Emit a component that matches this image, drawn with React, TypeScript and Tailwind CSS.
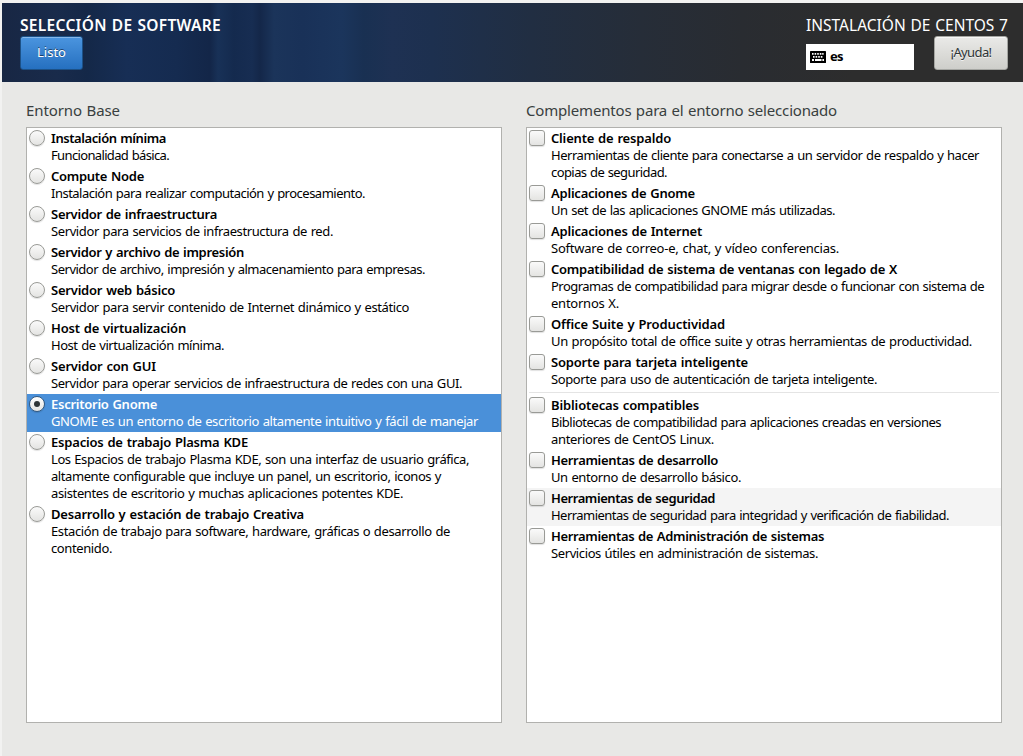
import { useLayoutEffect, useRef, useState } from "react";

type Line = [text: string, width: number];
type Item = { title: Line; body: Line[]; state?: "selected" | "hover"; divider?: boolean };

const environments: Item[] = [
  { title: ["Instalación mínima", 115], body: [["Funcionalidad básica.", 118]] },
  { title: ["Compute Node", 93], body: [["Instalación para realizar computación y procesamiento.", 314]] },
  { title: ["Servidor de infraestructura", 166], body: [["Servidor para servicios de infraestructura de red.", 282]] },
  { title: ["Servidor y archivo de impresión", 193], body: [["Servidor de archivo, impresión y almacenamiento para empresas.", 374]] },
  { title: ["Servidor web básico", 124], body: [["Servidor para servir contenido de Internet dinámico y estático", 358]] },
  { title: ["Host de virtualización", 135], body: [["Host de virtualización mínima.", 173]] },
  { title: ["Servidor con GUI", 105], body: [["Servidor para operar servicios de infraestructura de redes con una GUI.", 411]] },
  { title: ["Escritorio Gnome", 106], body: [["GNOME es un entorno de escritorio altamente intuitivo y fácil de manejar", 427]], state: "selected" },
  {
    title: ["Espacios de trabajo Plasma KDE", 197],
    body: [
      ["Los Espacios de trabajo Plasma KDE, son una interfaz de usuario gráfica,", 418],
      ["altamente configurable que incluye un panel, un escritorio, iconos y", 390],
      ["asistentes de escritorio y muchas aplicaciones potentes KDE.", 352],
    ],
  },
  {
    title: ["Desarrollo y estación de trabajo Creativa", 253],
    body: [["Estación de trabajo para software, hardware, gráficas o desarrollo de", 399], ["contenido.", 61]],
  },
];

const addons: Item[] = [
  {
    title: ["Cliente de respaldo", 120],
    body: [["Herramientas de cliente para conectarse a un servidor de respaldo y hacer", 428], ["copias de seguridad.", 116]],
  },
  { title: ["Aplicaciones de Gnome", 144], body: [["Un set de las aplicaciones GNOME más utilizadas.", 284]] },
  { title: ["Aplicaciones de Internet", 151], body: [["Software de correo-e, chat, y vídeo conferencias.", 288]] },
  {
    title: ["Compatibilidad de sistema de ventanas con legado de X", 346],
    body: [["Programas de compatibilidad para migrar desde o funcionar con sistema de", 433], ["entornos X.", 68]],
  },
  { title: ["Office Suite y Productividad", 174], body: [["Un propósito total de office suite y otras herramientas de productividad.", 421]] },
  { title: ["Soporte para tarjeta inteligente", 197], body: [["Soporte para uso de autenticación de tarjeta inteligente.", 326]], divider: true },
  {
    title: ["Bibliotecas compatibles", 148],
    body: [["Bibliotecas de compatibilidad para aplicaciones creadas en versiones", 390], ["anteriores de CentOS Linux.", 163]],
  },
  { title: ["Herramientas de desarrollo", 167], body: [["Un entorno de desarrollo básico.", 190]] },
  { title: ["Herramientas de seguridad", 164], body: [["Herramientas de seguridad para integridad y verificación de fiabilidad.", 398]], state: "hover" },
  { title: ["Herramientas de Administración de sistemas", 273], body: [["Servicios útiles en administración de sistemas.", 267]] },
];

/* A single line of text whose tracking is adjusted to span the given width. */
function Fit({ line, className = "" }: { line: Line; className?: string }) {
  const ref = useRef<HTMLSpanElement>(null);
  const [spacing, setSpacing] = useState(0);
  useLayoutEffect(() => {
    const el = ref.current;
    if (el) setSpacing((line[1] - el.getBoundingClientRect().width) / line[0].length);
  }, [line[0], line[1]]);
  return (
    <span className={`block whitespace-nowrap ${className}`}>
      <span ref={ref} className="[word-spacing:0.7px]" style={{ letterSpacing: spacing }}>{line[0]}</span>
    </span>
  );
}

function Marker({ kind, selected }: { kind: "radio" | "check"; selected: boolean }) {
  return (
    <span
      className={`flex size-4 shrink-0 items-center justify-center border bg-linear-to-b shadow-[0_1px_1px_rgba(0,0,0,0.12)] ${
        kind === "radio" ? "rounded-full" : "rounded-[3px]"
      } ${selected ? "border-[#34597f] from-white to-[#e4e4e2]" : "border-[#999a96] from-[#fafafa] to-[#e4e4e2]"}`}
    >
      {selected && <span className="size-1.5 rounded-full bg-[#2e3436]" />}
    </span>
  );
}

function List({ heading, items, kind }: { heading: Line; items: Item[]; kind: "radio" | "check" }) {
  return (
    <section className="w-[476px]">
      <h2 className="h-[27px] text-[15px] leading-[20px] text-[#393f40]">
        <Fit line={heading} />
      </h2>
      <div className="h-[596px] border border-[#b1b1ae] bg-white">
        {items.map((item) => (
          <div key={item.title[0]}>
            <div
              className={`flex gap-[6px] py-[2px] pl-[2px] text-[13px] leading-[17px] ${
                item.state === "selected" ? "bg-[#4a90d9] text-white" : item.state === "hover" ? "bg-[#f4f4f4] text-black" : "text-black"
              }`}
            >
              <Marker kind={kind} selected={item.state === "selected"} />
              <div>
                <Fit line={item.title} className="font-semibold" />
                {item.body.map((line) => (
                  <Fit key={line[0]} line={line} />
                ))}
              </div>
            </div>
            {item.divider && (
              <div className="h-[5px] px-[2px] pt-[2px]">
                <div className="h-px bg-[#e4e4e4]" />
              </div>
            )}
          </div>
        ))}
      </div>
    </section>
  );
}

function KeyboardIcon() {
  return (
    <svg width="16" height="12" viewBox="0 0 16 12">
      <rect width="16" height="12" rx="0.6" fill="#000" />
      <path
        d="M2 2h1.6v1.7H2zM4.6 2h1.6v1.7H4.6zM7.2 2h1.6v1.7H7.2zM9.8 2h1.6v1.7H9.8zM12.2 2h1.4v1.7h-1.4zM3 5h1.6v1.7H3zM5.6 5h1.6v1.7H5.6zM8.2 5h1.6v1.7H8.2zM10.8 5h1.6v1.7h-1.6zM2 8h2v1.9H2zM5 8h6.5v1.9H5zM12.4 8H14v1.9h-1.6z"
        fill="#fff"
      />
    </svg>
  );
}

function Header() {
  return (
    <header className="flex h-[79px] justify-between bg-[linear-gradient(90deg,#182744_0px,#192b4b_55px,#142848_85px,#172e55_125px,#152b50_175px,#132648_208px,#183157_216px,#142a4e_232px,#172d52_250px,#142749_258px,#1b345a_272px,#193158_300px,#1b355c_340px,#193052_362px,#1e3153_390px,#1d304f_430px,#212e42_530px,#262d38_640px,#292c31_740px,#2d2d2d_850px)] pr-[15px] pl-[18px] pt-[12px] text-white">
      <div>
        <h1 className="h-[21px] text-[15.5px] leading-5 font-semibold">
          <Fit line={["SELECCIÓN DE SOFTWARE", 201]} />
        </h1>
        <button className="flex h-[34px] w-[63px] items-center justify-center rounded-[3px] border border-[#1c5187] bg-linear-to-b from-[#4b95df] to-[#2570c0] text-[13px] shadow-[inset_0_1px_0_#85b7e9] text-shadow-[0_-1px_0_rgba(0,0,0,0.5)]">
          <Fit line={["Listo", 29]} />
        </button>
      </div>
      <div className="w-[202px]">
        <div className="h-[21px] text-[15.5px] leading-5">
          <Fit line={["INSTALACIÓN DE CENTOS 7", 202]} />
        </div>
        <div className="flex items-end justify-between">
          <div className="flex h-[26px] w-[108px] items-center gap-1 bg-white pl-1 text-[13px] font-bold text-black">
            <KeyboardIcon />
            <Fit line={["es", 13]} />
          </div>
          <button className="flex h-[34px] w-[74px] items-center justify-center rounded-[3px] border border-[#a5a6a2] bg-linear-to-b from-[#eaeae8] to-[#cececa] text-[13px] text-[#2e3436] shadow-[inset_0_1px_0_#f7f7f6] text-shadow-[0_1px_0_rgba(255,255,255,0.7)]">
            <Fit line={["¡Ayuda!", 41]} />
          </button>
        </div>
      </div>
    </header>
  );
}

export default function App() {
  return (
    <div className="h-[756px] w-[1023px] overflow-hidden bg-[#f2f2f1] pt-[3px] pl-[2px] font-['Noto_Sans','Open_Sans',sans-serif]">
      <div className="h-[753px] bg-[#e8e8e6]">
        <Header />
        <main className="flex gap-6 pt-[18px] pl-6">
          <List heading={["Entorno Base", 94]} items={environments} kind="radio" />
          <List heading={["Complementos para el entorno seleccionado", 311]} items={addons} kind="check" />
        </main>
      </div>
    </div>
  );
}
